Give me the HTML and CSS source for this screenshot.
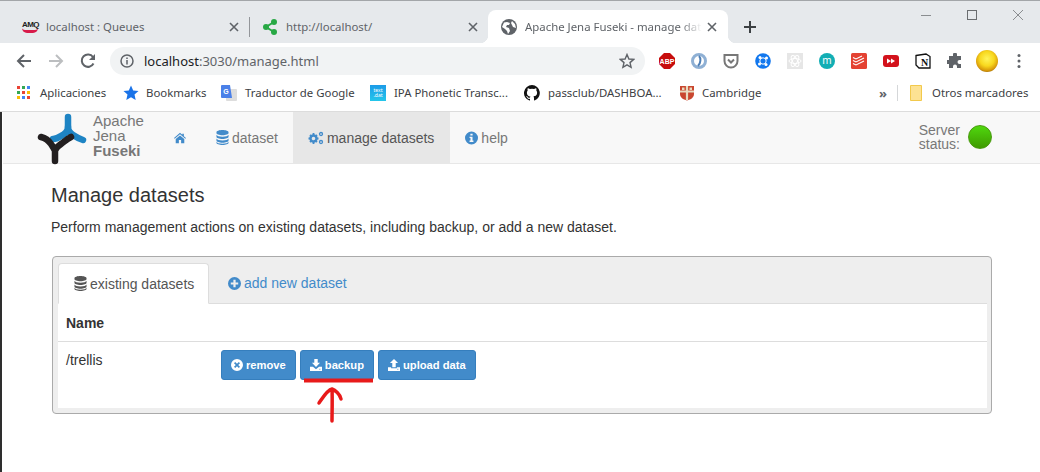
FILE: index.html

```html
<!DOCTYPE html>
<html lang="en">
<head>
  <meta charset="UTF-8" />
  <title>Apache Jena Fuseki - manage datasets</title>
  <link rel="stylesheet" href="styles.css">
</head>
<body>
  <svg class="sprites" width="0" height="0">
    <symbol id="i-db" viewBox="0 0 14 16">
      <path d="M7 0C3.4 0 .5 1 .5 2.4v.8C.5 4.600 3.400 5.600 7 5.600s6.500-1 6.500-2.400v-.8C13.500 1 10.600 0 7 0zM.5 5v2.200c0 1.400 2.900 2.400 6.500 2.400s6.500-1 6.500-2.400V5C13 6.400 10.500 7.100 7 7.100S1 6.400.500 5zm0 4v2.200c0 1.400 2.900 2.400 6.500 2.400s6.500-1 6.500-2.400V9c-.5 1.400-3 2.100-6.500 2.100S1 10.400.5 9zm0 3.600v1c0 1.400 2.900 2.400 6.500 2.400s6.500-1 6.500-2.400v-1c-.5 1.300-3 2-6.500 2s-6-.7-6.500-2z" fill="currentColor"/>
    </symbol>
    <symbol id="i-info" viewBox="0 0 14 14">
      <path fill-rule="evenodd" d="M7 0a7 7 0 1 1 0 14A7 7 0 0 1 7 0zM5.800 2.300v2h2.400v-2zM4.900 5.600v1.500h1v2.600h-1v1.600h4.200V9.700h-1V5.600z" fill="currentColor"/>
    </symbol>
    <symbol id="i-plus" viewBox="0 0 14 14">
      <path fill-rule="evenodd" d="M7 0a7 7 0 1 1 0 14A7 7 0 0 1 7 0zM5.800 3v2.800H3v2.400h2.800V11h2.400V8.200H11V5.800H8.200V3z" fill="currentColor"/>
    </symbol>
    <symbol id="i-times" viewBox="0 0 14 14">
      <path fill-rule="evenodd" d="M7 0a7 7 0 1 1 0 14A7 7 0 0 1 7 0zM4.900 3.500 3.500 4.900 5.600 7 3.500 9.100l1.400 1.400L7 8.400l2.100 2.100 1.400-1.400L8.400 7l2.100-2.100-1.400-1.400L7 5.600z" fill="currentColor"/>
    </symbol>
    <symbol id="i-down" viewBox="0 0 14 14">
      <path fill-rule="evenodd" d="M5 0h4v4.500h2.700L7 9.300 2.300 4.500H5zM0 9h3.400L7 12l3.600-3H14v5H0zm11 2.500v1h1v-1z" fill="currentColor"/>
    </symbol>
    <symbol id="i-up" viewBox="0 0 14 14">
      <path fill-rule="evenodd" d="M7 0l4.700 4.800H9v4.700H5V4.800H2.300zM0 9.500h3.700v1.300h6.600V9.500H14V14H0zm11 2v1h1v-1z" fill="currentColor"/>
    </symbol>
    <symbol id="i-close" viewBox="0 0 10 10">
      <path d="M1 1l8 8M9 1 1 9" stroke="currentColor" stroke-width="1.600"/>
    </symbol>
  </svg>

  <div class="tabstrip">
    <div class="tab">
      <span class="amq">AMQ</span>
      <span class="tab-title">localhost : Queues</span>
      <svg class="tab-close"><use href="#i-close"/></svg>
    </div>
    <div class="tab tab-sep">
      <svg class="favicon" viewBox="0 0 16 16"><path d="M12 3 4 8l8 5" fill="none" stroke="#27a844" stroke-width="2"/><circle cx="12" cy="3" r="3" fill="#27a844"/><circle cx="4" cy="8" r="3" fill="#27a844"/><circle cx="12" cy="13" r="3" fill="#27a844"/></svg>
      <span class="tab-title">http://localhost/</span>
      <svg class="tab-close"><use href="#i-close"/></svg>
    </div>
    <div class="tab tab-active">
      <svg class="favicon" viewBox="0 0 16 16"><circle cx="8" cy="8" r="8" fill="#5f6368"/><path d="M3 3.500 6 3l3 1-1 2H6L5 8l3 1 1 3-2 3-1-3-2-2-3-2zM11 2l3 3 1 4-3-1-1-2-1-2z" fill="#fff"/></svg>
      <span class="tab-title tab-fade">Apache Jena Fuseki - manage dat</span>
      <svg class="tab-close"><use href="#i-close"/></svg>
    </div>
    <svg class="new-tab" viewBox="0 0 12 12"><path d="M6 0v12M0 6h12" stroke="#3c4043" stroke-width="2"/></svg>
    <div class="window-btns">
      <svg viewBox="0 0 10 10"><path d="M0 5.500h10" stroke="#8a8d90"/></svg>
      <svg viewBox="0 0 10 10"><rect x=".5" y=".5" width="9" height="9" fill="none" stroke="#6a6d70"/></svg>
      <svg viewBox="0 0 10 10"><path d="M0 0l10 10M10 0 0 10" stroke="#8a8d90"/></svg>
    </div>
  </div>

  <div class="toolbar">
    <svg class="nav-arrow" viewBox="0 0 16 16"><path d="M15 8H2M8 2 2 8l6 6" fill="none" stroke="#5f6368" stroke-width="2"/></svg>
    <svg class="nav-arrow" viewBox="0 0 16 16"><path d="M1 8h13M8 2l6 6-6 6" fill="none" stroke="#bcbec0" stroke-width="2"/></svg>
    <svg class="nav-arrow" viewBox="0 0 16 16"><path d="M13.500 10.500A6.200 6.200 0 1 1 13 4" fill="none" stroke="#5f6368" stroke-width="2"/><path d="M15 1v6H9z" fill="#5f6368"/></svg>
    <div class="omnibox">
      <svg class="omni-info" viewBox="0 0 14 14"><circle cx="7" cy="7" r="6" fill="none" stroke="#5f6368" stroke-width="1.500"/><path d="M7 6v4.500M7 3.500v1.500" stroke="#5f6368" stroke-width="1.500"/></svg>
      <span class="url"><span class="url-host">localhost</span>:3030/manage.html</span>
      <svg class="omni-star" viewBox="0 0 16 16"><path d="M8 1.500 9.900 6l4.800.4-3.700 3.200 1.100 4.700L8 11.800l-4.100 2.500L5 9.600 1.300 6.400 6.100 6z" fill="none" stroke="#5f6368" stroke-width="1.400"/></svg>
    </div>
    <div class="extensions">
      <span class="ext"><svg viewBox="0 0 16 16"><path d="M5 0h6l5 5v6l-5 5H5l-5-5V5z" fill="#c70d0d"/><text x="8" y="10.800" class="abp">ABP</text></svg></span>
      <span class="ext"><svg viewBox="0 0 16 16"><circle cx="8" cy="8" r="6.500" fill="none" stroke="#8fb0d4" stroke-width="3"/><path d="M8 3c2 2 2 7-1 10" fill="none" stroke="#4f7fb5" stroke-width="2"/></svg></span>
      <span class="ext"><svg viewBox="0 0 16 16"><path d="M1.500 2h13v6a6.500 6.500 0 0 1-13 0z" fill="none" stroke="#777" stroke-width="2"/><path d="M5 6.500l3 3 3-3" fill="none" stroke="#777" stroke-width="2"/></svg></span>
      <span class="ext"><svg viewBox="0 0 16 16"><circle cx="8" cy="8" r="7.800" fill="#1177ee"/><circle cx="8" cy="8" r="3.200" fill="none" stroke="#fff" stroke-width="1"/><circle cx="5" cy="4.500" r="1.500" fill="#fff"/><circle cx="11.500" cy="5" r="1.500" fill="#fff"/><circle cx="4.500" cy="11" r="1.500" fill="#fff"/><circle cx="11" cy="11.500" r="1.500" fill="#fff"/></svg></span>
      <span class="ext"><svg viewBox="0 0 16 16"><rect width="16" height="16" fill="#e6e6e6"/><g fill="none" stroke="#fff"><ellipse cx="8" cy="8" rx="6" ry="2.500"/><ellipse cx="8" cy="8" rx="6" ry="2.500" transform="rotate(60 8 8)"/><ellipse cx="8" cy="8" rx="6" ry="2.500" transform="rotate(120 8 8)"/></g></svg></span>
      <span class="ext"><svg viewBox="0 0 16 16"><circle cx="8" cy="8" r="8" fill="#12aeb4"/><text x="8" y="11" class="ext-m">m</text></svg></span>
      <span class="ext"><svg viewBox="0 0 16 16"><rect width="16" height="16" rx="1.500" fill="#e44232"/><path d="M2 4.500l3 1.500 6-3M2 7.500l3 1.500 8-4M2 10.500l3 1.500 8-4" fill="none" stroke="#fff" stroke-width="1.100"/></svg></span>
      <span class="ext"><svg viewBox="0 0 16 16"><rect y="2" width="16" height="12" rx="3" fill="#d3121c"/><path d="M4 5.500 8 8l-4 2.500zM8 5.500 12 8l-4 2.500z" fill="#fff"/></svg></span>
      <span class="ext"><svg viewBox="0 0 16 16"><path d="M1 2.500 11 1l4 2.500V15H4l-3-3z" fill="#fff" stroke="#111" stroke-width="1.300"/><text x="9.500" y="12.500" class="ext-n">N</text></svg></span>
      <span class="ext"><svg viewBox="0 0 16 16"><path d="M6 1.500a2 2 0 0 1 4 0V3h4v4h-1.500a2 2 0 0 0 0 4H14v4h-4v-1.500a2 2 0 0 0-4 0V15H2v-4H.7a2 2 0 0 1 0-4H2V3h4z" fill="#5f6368"/></svg></span>
      <span class="ext"><span class="avatar"></span></span>
      <span class="ext"><svg class="dots" viewBox="0 0 4 16"><circle cx="2" cy="2.500" r="1.500" fill="#5f6368"/><circle cx="2" cy="8" r="1.500" fill="#5f6368"/><circle cx="2" cy="13.500" r="1.500" fill="#5f6368"/></svg></span>
    </div>
  </div>

  <div class="bookmarks">
    <a class="bm bm-apps"><span class="apps-grid"><i></i><i></i><i></i><i></i><i></i><i></i><i></i><i></i><i></i></span>Aplicaciones</a>
    <a class="bm bm-star"><svg viewBox="0 0 16 16"><path d="M8 .5l2.200 5 5.300.5-4 3.600 1.200 5.400L8 12.200 3.300 15l1.200-5.400-4-3.600 5.300-.5z" fill="#1a73e8"/></svg>Bookmarks</a>
    <a class="bm bm-trans"><svg viewBox="0 0 16 16"><rect x="5" y="4" width="11" height="12" rx="1" fill="#ddd"/><path d="M1 0h8l2 13H1a1 1 0 0 1-1-1V1a1 1 0 0 1 1-1z" fill="#4a80e8"/><text x="5" y="9" class="bm-g">G</text></svg>Traductor de Google</a>
    <a class="bm bm-ipa"><span class="ipa-icon">text<br>.dat</span>IPA Phonetic Transc...</a>
    <a class="bm bm-git"><svg viewBox="0 0 16 16"><path d="M8 0a8 8 0 0 0-2.500 15.600c.4.100.5-.2.500-.4v-1.400c-2.200.5-2.700-1-2.700-1-.4-.9-.9-1.200-.9-1.200-.7-.5.100-.5.100-.5.800.1 1.200.8 1.200.8.700 1.200 1.900.9 2.300.7.100-.5.300-.9.500-1.100-1.800-.2-3.600-.9-3.600-4 0-.9.300-1.600.8-2.100-.1-.2-.4-1 .1-2.100 0 0 .7-.2 2.200.8a7.600 7.600 0 0 1 4 0c1.500-1 2.200-.8 2.200-.8.400 1.100.2 1.900.1 2.100.5.500.8 1.300.8 2.100 0 3.100-1.900 3.700-3.700 3.900.3.300.6.800.6 1.500v2.200c0 .2.100.5.600.4A8 8 0 0 0 8 0z" fill="#111"/></svg>passclub/DASHBOA...</a>
    <a class="bm bm-cam"><svg viewBox="0 0 16 16"><path d="M1 1h14v8c0 3.500-3 5.500-7 6.500C4 14.500 1 12.500 1 9z" fill="#c9472f"/><path d="M8 1v14M1 6.500h14" stroke="#e8dcc0" stroke-width="2.200"/><rect x="3" y="2.500" width="2.500" height="2.500" fill="#e8dcc0"/><rect x="10.500" y="2.500" width="2.500" height="2.500" fill="#e8dcc0"/></svg>Cambridge</a>
    <span class="bm-more">»</span>
    <span class="bm-sep"></span>
    <a class="bm bm-other"><svg class="folder" viewBox="0 0 12 16"><path d="M.500.500h11v15H.500z" fill="#fde293" stroke="#f2c94c"/></svg>Otros marcadores</a>
  </div>

  <div class="page">
    <nav class="navbar">
      <svg class="logo" viewBox="0 0 54 54">
        <g fill="none" stroke-linecap="round">
          <path d="M33 5v10c0 4 2 6 5 8 3 2 7 4 10 5" stroke="#1e84c4" stroke-width="6.500"/>
          <path d="M33 15c0 4-3 7-7 9-3 2-5 3-8 3" stroke="#1e84c4" stroke-width="6.500"/>
          <path d="M6 25c4 1 8 4 10 7 2 3 3 5 4 6 1-2 3-4 6-6 3-2 6-5 10-7" stroke="#231f20" stroke-width="6.500"/>
          <path d="M20 37v12" stroke="#231f20" stroke-width="6.500"/>
        </g>
      </svg>
      <div class="brand">Apache<br>Jena<br><b>Fuseki</b></div>
      <a class="nav-item"><svg class="nav-icon home" viewBox="0 0 14 12"><path d="M7 0 0 6l.8 1L7 1.700 13.200 7l.8-1-2.500-2.100V1h-1.800v1.300zM2 7.300V12h3.700V8.400h2.600V12H12V7.300L7 3z" fill="currentColor"/></svg></a>
      <a class="nav-item"><svg class="nav-icon db"><use href="#i-db"/></svg><span class="nav-text">dataset</span></a>
      <a class="nav-item nav-active"><svg class="nav-icon cogs" viewBox="0 0 16 14"><g fill="none" stroke="currentColor"><circle cx="5.500" cy="7.500" r="3" stroke-width="2.400"/><path d="M5.500 2v2M5.500 11v2M.5 7.500h2M8.500 7.500h2M2 4l1.400 1.400M7.600 9.600 9 11M2 11l1.400-1.400M7.600 5.400 9 4" stroke-width="1.800"/><circle cx="13" cy="3" r="1.500" stroke-width="1.300"/><circle cx="13" cy="11" r="1.500" stroke-width="1.300"/></g></svg><span class="nav-text">manage datasets</span></a>
      <a class="nav-item"><svg class="nav-icon info"><use href="#i-info"/></svg><span class="nav-text">help</span></a>
      <div class="server-status">
        <span>Server<br>status:</span>
        <span class="status-light"></span>
      </div>
    </nav>

    <main class="content">
      <h2>Manage datasets</h2>
      <p>Perform management actions on existing datasets, including backup, or add a new dataset.</p>

      <div class="panel">
        <div class="panel-tabs">
          <a class="ptab ptab-active"><svg class="ptab-icon db"><use href="#i-db"/></svg>existing datasets</a>
          <a class="ptab"><svg class="ptab-icon"><use href="#i-plus"/></svg>add new dataset</a>
        </div>
        <div class="panel-body">
          <table>
            <tr><th class="col-name">Name</th><th></th></tr>
            <tr>
              <td>/trellis</td>
              <td class="actions">
                <button class="btn"><svg><use href="#i-times"/></svg>remove</button>
                <button class="btn"><svg><use href="#i-down"/></svg>backup</button>
                <button class="btn"><svg><use href="#i-up"/></svg>upload data</button>
              </td>
            </tr>
          </table>
        </div>
      </div>
    </main>

    <svg class="scribble" viewBox="0 0 72 46">
      <path d="M2 2.500h69" stroke="#e81a1a" stroke-width="4"/>
      <path d="M30 43c0-8 .5-22 0-32M17 25c3-4 8-13 13-14 3 1 8 5 9 10" fill="none" stroke="#e81a1a" stroke-width="3.500" stroke-linecap="round"/>
    </svg>
  </div>
</body>
</html>
```

FILE: styles.css

```css
* {
  box-sizing: border-box;
}

html, body {
  margin: 0;
  height: 472px;
  overflow: hidden;
}

body {
  font-family: "Liberation Sans", Arial, sans-serif;
  font-size: 14px;
  color: #333;
  background: #fff;
}

.sprites {
  display: block;
  height: 0;
}

/* browser chrome */
.tabstrip {
  display: flex;
  height: 43px;
  padding: 9px 0 0 8px;
  background: #e6e9ec;
  border-top: 1px solid #a3a6a9;
  font-family: "Noto Sans", sans-serif;
  font-size: 11.400px;
  color: #5f6368;
}

.tab {
  position: relative;
  display: flex;
  align-items: center;
  width: 241px;
  height: 33px;
  padding: 0 10px 0 14px;
}

.tab-sep {
  width: 239px;
  padding-left: 13px;
}

.tab-sep::before {
  content: "";
  position: absolute;
  left: 0;
  top: 7px;
  height: 20px;
  border-left: 1px solid #93969a;
}

.tab-active {
  width: 240px;
  padding-left: 13px;
  padding-right: 11px;
  background: #fff;
  border-radius: 8px 8px 0 0;
}

.tab-active::before,
.tab-active::after {
  content: "";
  position: absolute;
  bottom: 0;
  width: 8px;
  height: 8px;
}

.tab-active::before {
  left: -8px;
  background: radial-gradient(circle at 0 0, #e6e9ec 8px, #fff 8.500px);
}

.tab-active::after {
  right: -8px;
  background: radial-gradient(circle at 100% 0, #e6e9ec 8px, #fff 8.500px);
}

.favicon, .amq {
  flex: none;
  width: 16px;
  height: 16px;
}

.amq {
  font-family: "Liberation Sans", sans-serif;
  font-size: 8px;
  font-weight: bold;
  line-height: 9px;
  color: #222;
  border-bottom: 3px solid #d81b4a;
  height: 13px;
  border-radius: 0 0 5px 5px;
  letter-spacing: -.6px;
}

.tab-title {
  flex: 1;
  margin-left: 8px;
  white-space: nowrap;
  overflow: hidden;
}

.tab-fade {
  -webkit-mask-image: linear-gradient(to right, #000 155px, transparent 177px);
  mask-image: linear-gradient(to right, #000 155px, transparent 177px);
}

.tab-close {
  flex: none;
  width: 10px;
  height: 10px;
  color: #5f6368;
}

.new-tab {
  width: 12px;
  height: 12px;
  margin: 11px 0 0 16px;
}

.window-btns {
  display: flex;
  gap: 36px;
  margin: 0 17px 0 auto;
}

.window-btns svg {
  width: 10px;
  height: 10px;
}

.toolbar {
  display: flex;
  align-items: center;
  height: 35px;
  padding-left: 16px;
  background: #fff;
}

.nav-arrow {
  width: 16px;
  height: 16px;
  margin-right: 16px;
}

.omnibox {
  display: flex;
  align-items: center;
  width: 535px;
  height: 28px;
  margin-left: -2px;
  padding: 0 10px;
  background: #f1f3f4;
  border-radius: 14px;
}

.omni-info {
  width: 14px;
  height: 14px;
}

.url {
  margin-left: 10px;
  font-family: "Noto Sans", sans-serif;
  font-size: 13px;
  color: #5f6368;
}

.url-host {
  color: #202124;
}

.omni-star {
  width: 16px;
  height: 16px;
  margin-left: auto;
  margin-right: 0;
}

.extensions {
  display: flex;
  margin-left: 6px;
}

.ext {
  display: flex;
  justify-content: center;
  align-items: center;
  width: 32px;
  height: 28px;
}

.ext svg {
  width: 16px;
  height: 16px;
}

.ext .dots {
  width: 4px;
}

.abp {
  font-family: "Liberation Sans", sans-serif;
  font-size: 7px;
  font-weight: bold;
  fill: #fff;
  text-anchor: middle;
}

.ext-m {
  font-family: "Noto Sans", sans-serif;
  font-size: 10px;
  fill: #fff;
  text-anchor: middle;
}

.ext-n {
  font-family: "Liberation Serif", serif;
  font-size: 10px;
  font-weight: bold;
  fill: #111;
  text-anchor: middle;
}

.avatar {
  width: 22px;
  height: 22px;
  border-radius: 50%;
  background: radial-gradient(circle at 50% 40%, #fff45a 0, #f8d81e 42%, #d99a0a 68%, #4a2a04 100%);
}

.bookmarks {
  display: flex;
  align-items: center;
  height: 34px;
  padding-bottom: 4px;
  background: #fff;
  border-bottom: 1px solid #dcdcdc;
  font-family: "Noto Sans", sans-serif;
  font-size: 11.400px;
  color: #3c4043;
}

.bm {
  display: flex;
  align-items: center;
  gap: 8px;
  white-space: nowrap;
}

.bm svg {
  flex: none;
  width: 16px;
  height: 16px;
}

.bm-apps {
  width: 106px;
  margin-left: 17px;
  gap: 10px;
}

.bm-star {
  width: 98px;
  gap: 7px;
}

.bm-trans {
  width: 149px;
}

.bm-ipa {
  width: 154px;
}

.bm-git {
  width: 155px;
}

.bm-cam {
  width: 200px;
  gap: 7px;
}

.apps-grid {
  display: grid;
  grid-template-columns: repeat(3, 3px);
  gap: 2px;
  flex: none;
}

.apps-grid i {
  display: block;
  height: 3px;
  background: #ea4335;
}

.apps-grid i:nth-child(2), .apps-grid i:nth-child(4) { background: #34a853; }
.apps-grid i:nth-child(3), .apps-grid i:nth-child(8) { background: #4285f4; }
.apps-grid i:nth-child(6), .apps-grid i:nth-child(7) { background: #fbbc05; }

.bm-g {
  font-family: "Liberation Sans", sans-serif;
  font-size: 7px;
  font-weight: bold;
  fill: #fff;
  text-anchor: middle;
}

.ipa-icon {
  flex: none;
  width: 16px;
  height: 16px;
  padding-top: 3px;
  background: linear-gradient(#1c9be8, #24c6ea);
  font-size: 5px;
  line-height: 5px;
  color: #fff;
  text-align: center;
}

.bm-more {
  width: 18px;
  font-size: 13px;
  font-weight: bold;
  color: #5f6368;
}

.bm-sep {
  height: 16px;
  margin-right: 12px;
  border-left: 1px solid #d5d7d9;
}

.bm-other .folder {
  width: 12px;
  margin-right: 2px;
}

/* fuseki page */
.page {
  position: relative;
  height: 360px;
  border-left: 2px solid #2e2e2e;
}

.navbar {
  display: flex;
  height: 52px;
  margin-left: 1px;
  background: #f8f8f8;
  border-bottom: 1px solid #e7e7e7;
  color: #777;
}

.logo {
  flex: none;
  width: 54px;
  height: 54px;
  margin: 0 0 0 32px;
}

.brand {
  flex: none;
  width: 66px;
  margin: 1px 0 0 4px;
  font-size: 15px;
  line-height: 15px;
}

.nav-item {
  display: flex;
  align-items: center;
  height: 51px;
  padding: 0 15px;
}

.nav-active {
  padding-right: 16px;
  background: #e7e7e7;
  color: #555;
}

.nav-icon {
  width: 14px;
  height: 15px;
  color: #428bca;
}

.nav-icon.home {
  width: 12px;
  height: 12px;
}

.nav-icon.db {
  width: 13px;
}

.nav-icon.cogs {
  width: 16px;
  height: 14px;
}

.nav-icon.info {
  width: 13px;
  height: 14px;
}

.nav-text {
  margin-left: 3px;
}

.server-status {
  display: flex;
  align-items: center;
  gap: 8px;
  margin-left: auto;
  margin-right: 48px;
  padding-bottom: 2px;
  line-height: 14px;
}

.status-light {
  width: 24px;
  height: 24px;
  border-radius: 50%;
  background: linear-gradient(#4fd80e, #3f9a00);
  border: 1px solid #4a9a10;
}

.content {
  padding: 0 48px 0 49px;
}

h2 {
  margin: 20px 0 0;
  font-size: 20px;
  font-weight: normal;
  line-height: 22px;
}

p {
  margin: 11px 0 0;
  line-height: 20px;
}

.panel {
  width: 940px;
  height: 158px;
  margin: 19px 0 0 1px;
  padding: 6px 4px 5px 5px;
  background: #eee;
  border: 1px solid #aaa;
  border-radius: 4px;
}

.panel-tabs {
  display: flex;
  height: 41px;
  border-bottom: 1px solid #ddd;
}

.ptab {
  display: flex;
  align-items: center;
  height: 40px;
  padding: 0 15px 0 19px;
  color: #428bca;
  white-space: nowrap;
}

.ptab-active {
  width: 151px;
  height: 41px;
  padding-left: 15px;
  padding-right: 0;
  background: #fff;
  color: #555;
  border: 1px solid #ddd;
  border-bottom-color: #fff;
  border-radius: 4px 4px 0 0;
}

.ptab-icon {
  flex: none;
  width: 13px;
  height: 13px;
  margin-right: 3px;
}

.ptab-icon.db {
  height: 15px;
}

.panel-body {
  height: 104px;
  background: #fff;
}

table {
  width: 100%;
  border-collapse: collapse;
}

th, td {
  padding: 8px;
  text-align: left;
  vertical-align: top;
  line-height: 20px;
}

th {
  height: 37px;
  padding-top: 9px;
  padding-bottom: 7px;
  border-bottom: 1px solid #ddd;
}

.col-name {
  width: 155px;
}

.actions {
  display: flex;
  gap: 4px;
}

.btn {
  display: flex;
  align-items: center;
  height: 30px;
  padding: 0 9px;
  background: #428bca;
  border: 1px solid #357ebd;
  border-radius: 3px;
  font-family: inherit;
  font-size: 11.200px;
  font-weight: bold;
  color: #fff;
}

.btn svg {
  width: 12px;
  height: 12px;
  margin-right: 3px;
}

.scribble {
  position: absolute;
  left: 300px;
  top: 266px;
  width: 72px;
  height: 46px;
}
```
